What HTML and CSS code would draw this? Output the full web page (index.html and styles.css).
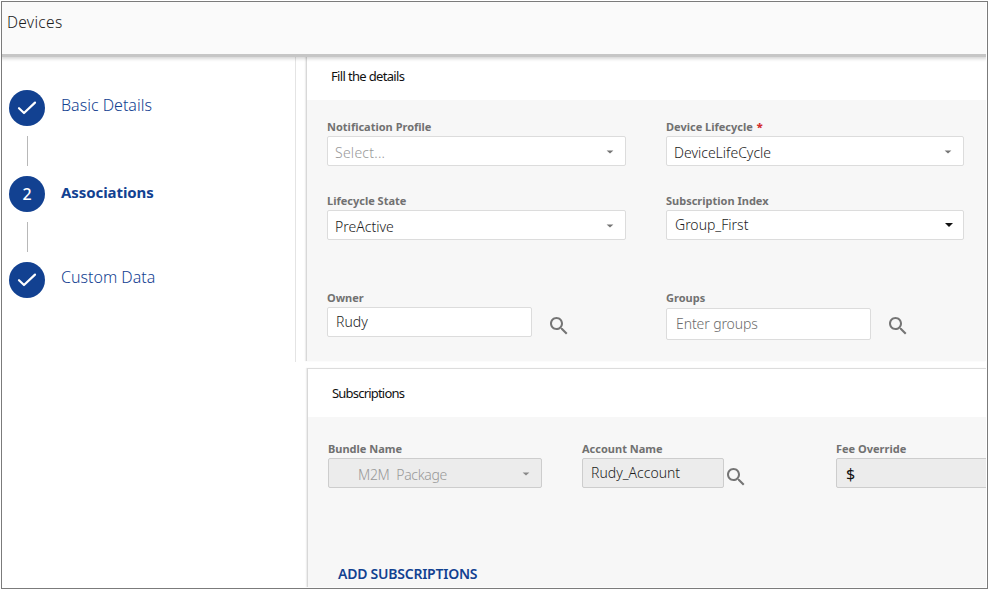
FILE: index.html
```
<!DOCTYPE html>
<html lang="en">
<head>
<meta charset="utf-8">
<title>Devices</title>
<link rel="stylesheet" href="styles.css">
</head>
<body>
<svg class="defs" width="0" height="0" aria-hidden="true">
  <symbol id="search" viewBox="0 0 24 24"><path d="M15.5 14h-.79l-.28-.27C15.41 12.59 16 11.11 16 9.5 16 5.91 13.09 3 9.5 3S3 5.91 3 9.5 5.91 16 9.5 16c1.61 0 3.09-.59 4.23-1.57l.27.28v.79l5 4.99L20.49 19l-4.99-5zm-6 0C7.01 14 5 11.99 5 9.5S7.01 5 9.5 5 14 7.01 14 9.5 11.99 14 9.5 14z"/></symbol>
  <symbol id="check" viewBox="0 0 24 24"><path d="M4 12.2l5 4.8L20 6.6" fill="none" stroke="#fff" stroke-width="2.2" stroke-linecap="round" stroke-linejoin="round"/></symbol>
</svg>
<div class="frame">
  <header class="topbar"><h1>Devices</h1></header>
  <main class="main">
    <nav class="stepper">
      <div class="step"><span class="dot"><svg><use href="#check"/></svg></span><span class="step-name">Basic Details</span></div>
      <div class="line"></div>
      <div class="step"><span class="dot">2</span><span class="step-name current">Associations</span></div>
      <div class="line"></div>
      <div class="step"><span class="dot"><svg><use href="#check"/></svg></span><span class="step-name">Custom Data</span></div>
    </nav>
    <div class="content">
      <section class="panel details">
        <h2>Fill the details</h2>
        <div class="grid">
          <div class="field"><label>Notification Profile</label><div class="box select placeholder"><span>Select...</span><i class="arrow"></i></div></div>
          <div class="field"><label>Device Lifecycle<b class="req">*</b></label><div class="box select"><span>DeviceLifeCycle</span><i class="arrow"></i></div></div>
          <div class="field"><label>Lifecycle State</label><div class="box select"><span>PreActive</span><i class="arrow"></i></div></div>
          <div class="field"><label>Subscription Index</label><div class="box select native"><span>Group_First</span><i class="arrow"></i></div></div>
          <div class="field lookup"><div class="entry"><label>Owner</label><div class="box input"><span>Rudy</span></div></div><svg class="search"><use href="#search"/></svg></div>
          <div class="field lookup"><div class="entry"><label>Groups</label><div class="box input tall"><span>Enter groups</span></div></div><svg class="search"><use href="#search"/></svg></div>
        </div>
      </section>
      <section class="panel subs">
        <h2>Subscriptions</h2>
        <div class="row">
          <div class="field"><label>Bundle Name</label><div class="box select disabled bundle"><span>M2M&nbsp; Package</span><i class="arrow"></i></div></div>
          <div class="field lookup"><div class="entry"><label>Account Name</label><div class="box disabled account"><span>Rudy_Account</span></div></div><svg class="search"><use href="#search"/></svg></div>
          <div class="field"><label>Fee Override</label><div class="box disabled fee"><span>$</span></div></div>
        </div>
        <a class="add">ADD SUBSCRIPTIONS</a>
      </section>
    </div>
  </main>
</div>
</body>
</html>
```
FILE: styles.css
```
* { box-sizing: border-box; }
body { margin: 0; padding: 1px 0 0 1px; background: #fff; font-family: "Noto Sans", "Open Sans", sans-serif; font-weight: 300; color: #1c1c1c; overflow: hidden; }
.defs { display: block; width: 0; height: 0; position: absolute; }
.frame { width: 987px; height: 588px; border: 1px solid #7b7b7b; padding: 0 1px 1px 0; display: flex; flex-direction: column; overflow: hidden; }
.topbar { height: 52px; flex: none; background: #fafafa; box-shadow: 0 3px 0 #c6c6c6, 0 4px 3px 1px rgba(0,0,0,.16); position: relative; padding: 9px 5px; clip-path: inset(0 0 -8px 0); }
h1 { margin: 0; font-size: 15.5px; line-height: 23px; font-weight: 300; letter-spacing: .3px; }
.main { display: flex; flex: 1; min-height: 0; }
.stepper { width: 294px; height: 308px; flex: none; border-right: 1px solid #e4e4e4; padding: 36px 0 0 7px; }
.step { display: flex; height: 36px; color: #124191; font-size: 16px; line-height: 31px; }
.dot { width: 36px; height: 36px; border-radius: 50%; background: #124191; color: #fff; line-height: 36px; font-weight: 500; margin-right: 16px; display: flex; align-items: center; justify-content: center; }
.dot svg { width: 24px; height: 24px; }
.line { width: 1px; height: 30px; margin: 10px 0 10px 18px; background: #b8b8b8; }
.current { font-weight: 700; line-height: 32px; font-size: 15px; letter-spacing: -.08px; }
.content { flex: 1; min-width: 0; padding-left: 10px; display: flex; flex-direction: column; }
.panel { border-left: 1px solid #d8d8d8; box-shadow: -1px 0 1px #eee; background: #f7f7f7; }
h2 { margin: 0; background: #fff; font-size: 13px; font-weight: 400; color: #111; padding-left: 24px; letter-spacing: -.66px; }
.details { height: 307px; flex: none; }
.details h2 { height: 46px; line-height: 45px; }
.grid { display: grid; grid-template-columns: 299px 298px; grid-template-rows: 50px 50px 53px; column-gap: 40px; row-gap: 24px; padding: 16px 0 0 20px; }
.grid .lookup { padding-top: 23px; height: 78px; }
.field label { display: block; height: 20px; font-size: 11px; font-weight: 700; line-height: 22px; color: #717171; white-space: nowrap; }
.req { color: #d32f2f; margin-left: 4px; font-size: 11px; }
.box { height: 30px; border: 1px solid #dcdcdc; border-radius: 2px; background: #fff; display: flex; align-items: center; justify-content: space-between; padding: 0 11px 0 7px; font-size: 14px; line-height: 28px; white-space: nowrap; }
.box span { padding-top: 4px; line-height: 24px; }
.placeholder { color: #999; letter-spacing: .25px; }
.arrow { width: 0; height: 0; border: 4px solid transparent; border-top: 4px solid #757575; border-bottom: 0; margin-top: 1px; transform: scale(.85, .8); }
.native { padding: 0 10px 0 8px; }
.native .arrow { transform: none; border-top-color: #111; margin-top: 0; }
.native span { padding-top: 0; }
.lookup { display: flex; }
.lookup .entry { width: 205px; flex: none; }
.search { width: 24px; height: 24px; fill: #757575; margin: 27px 0 0 14.5px; }
.input { padding-left: 8px; }
.input span { padding-top: 0; margin-top: -1px; }
.tall { height: 32px; margin-top: 1px; padding-left: 9px; color: #6b6b6b; }
.tall span { letter-spacing: -.1px; margin-top: 0; }
.subs { margin: 7px 0 0 1px; flex: 1; border-top: 1px solid #dcdcdc; }
.subs h2 { height: 48px; line-height: 49px; letter-spacing: -.8px; }
.row { display: flex; gap: 40px; padding: 21px 0 0 20px; overflow: hidden; }
.row .field { width: 214px; flex: none; }
.row .entry { width: 142px; }
.row .search { margin-left: 0; }
.disabled { background: #ececec; border-color: #cdcdcd; }
.disabled span { padding-top: 0; }
.account { padding-left: 8px; }
.account span { margin-top: -1px; }
.bundle { color: #999; padding-left: 29px; letter-spacing: -.3px; }
.bundle span { padding-top: 4px; }
.bundle .arrow { border-top-color: #888; }
.fee { padding-left: 9px; font-weight: 400; font-size: 16px; color: #111; }
.fee span { padding-top: 1px; }
.add { display: block; margin: 74px 0 0 30px; font-size: 14px; line-height: 22px; font-weight: 600; color: #124191; letter-spacing: -.24px; }
```
